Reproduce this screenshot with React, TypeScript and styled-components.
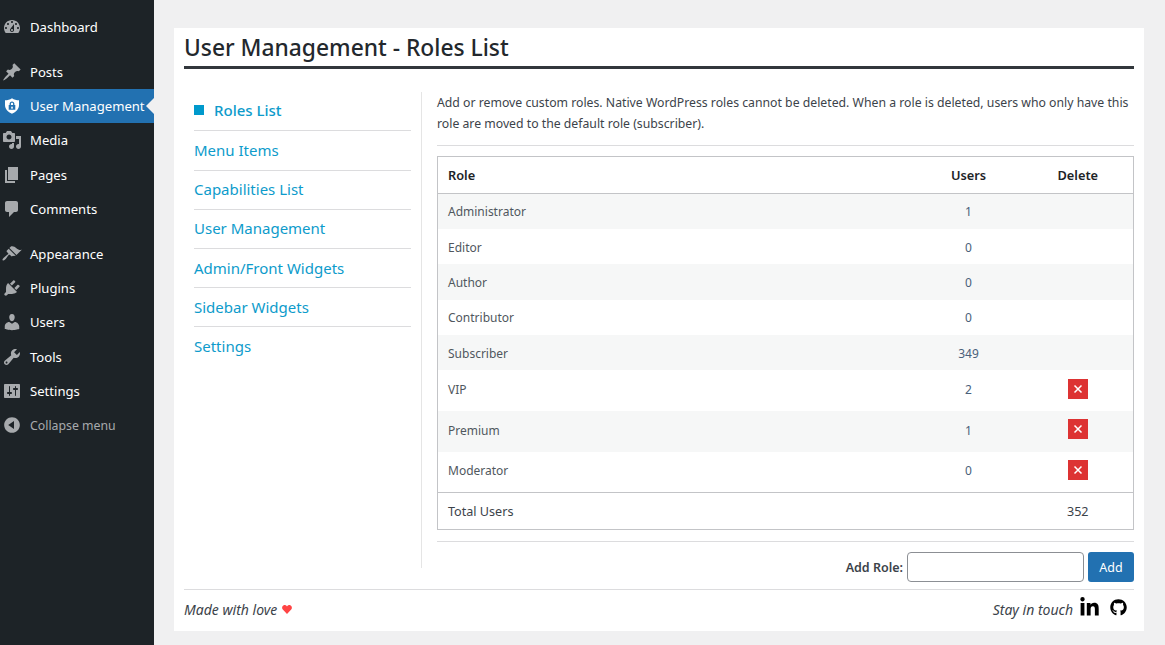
import { createGlobalStyle } from "styled-components";
import styled from "styled-components";
import { FaGithub, FaLinkedinIn } from "react-icons/fa";

const GlobalStyle = createGlobalStyle`
  html, body {
    margin: 0;
    padding: 0;
    background: #f0f0f1;
    font-family: "Noto Sans", "Open Sans", sans-serif;
    font-size: 13px;
    color: #3c434a;
  }
  * { box-sizing: border-box; }
`;

const icons = {
  dashboard:
    "M3.76 16h12.48c1.1-1.37 1.76-3.11 1.76-5 0-4.42-3.58-8-8-8s-8 3.58-8 8c0 1.89.66 3.63 1.76 5zM10 4c.55 0 1 .45 1 1s-.45 1-1 1-1-.45-1-1 .45-1 1-1zM6 6c.55 0 1 .45 1 1s-.45 1-1 1-1-.45-1-1 .45-1 1-1zm8 0c.55 0 1 .45 1 1s-.45 1-1 1-1-.45-1-1 .45-1 1-1zm-5.37 5.55L12 7v6c0 1.1-.9 2-2 2s-2-.9-2-2c0-.57.24-1.08.63-1.45zM4 10c.55 0 1 .45 1 1s-.45 1-1 1-1-.45-1-1 .45-1 1-1zm12 0c.55 0 1 .45 1 1s-.45 1-1 1-1-.45-1-1 .45-1 1-1zm-5 3c0-.55-.45-1-1-1s-1 .45-1 1 .45 1 1 1 1-.45 1-1z",
  posts:
    "M10.44 3.02l1.82-1.82 6.36 6.35-1.83 1.82c-1.05-.68-2.48-.57-3.41.36l-.75.75c-.92.93-1.04 2.35-.35 3.41l-1.83 1.82-2.41-2.41-2.8 2.79c-.42.42-3.38 2.71-3.8 2.29s1.86-3.39 2.28-3.81l2.79-2.79L4.1 9.36l1.83-1.82c1.05.69 2.48.57 3.4-.36l.75-.75c.93-.92 1.05-2.35.36-3.41z",
  shield:
    "M10 2.2c2.1 1.4 4.4 2 7 2.1v4.6c0 3.9-2.9 6.9-7 8.8-4.1-1.9-7-4.9-7-8.8V4.3c2.6-.1 4.9-.7 7-2.1zM10 5.4c-1.4 0-2.4 1-2.4 2.4v1.1h-.9v4.8h6.6V8.9h-.9V7.8c0-1.4-1-2.4-2.4-2.4zm0 1.3c.7 0 1.1.4 1.1 1.1v1.1H8.9V7.8c0-.7.4-1.1 1.1-1.1zm0 3.7c.5 0 .9.4.9.9 0 .3-.2.6-.4.8v.9h-1v-.9c-.2-.2-.4-.5-.4-.8 0-.5.4-.9.9-.9z",
  media:
    "M13 11V4c0-.55-.45-1-1-1h-1.67L9 1H5L3.67 3H2c-.55 0-1 .45-1 1v7c0 .55.45 1 1 1h10c.55 0 1-.45 1-1zM7 4.5c1.38 0 2.5 1.12 2.5 2.5S8.38 9.5 7 9.5 4.5 8.38 4.5 7 5.62 4.5 7 4.5zM14 6h5v10.5c0 1.38-1.12 2.5-2.5 2.5S14 17.88 14 16.5s1.12-2.5 2.5-2.5c.17 0 .34.02.5.05V9h-3V6zm-4 8.05V13h2v3.5c0 1.38-1.12 2.5-2.5 2.5S7 17.88 7 16.5 8.12 14 9.5 14c.17 0 .34.02.5.05z",
  pages: "M6 15V2h10v13H6zm-1 1h8v2H3V5h2v11z",
  comments:
    "M5 2h9c1.1 0 2 .9 2 2v7c0 1.1-.9 2-2 2h-2l-5 5v-5H5c-1.1 0-2-.9-2-2V4c0-1.1.9-2 2-2z",
  appearance:
    "M14.48 11.06L7.41 3.99l1.5-1.5c.5-.56 2.3-.47 3.51.32 1.21.8 1.43 1.28 2.91 2.1 1.18.64 2.45 1.26 4.45.85zm-.71.71L6.7 4.7 4.93 6.47c-.39.39-.39 1.02 0 1.41l1.06 1.06c.39.39.39 1.03 0 1.42-.6.6-1.43 1.11-2.21 1.69-.78.58-1.58 1.15-2.27 1.84-.98.98-1.34 1.94-.83 2.45.51.51 1.47.15 2.45-.83.69-.69 1.26-1.49 1.84-2.27.58-.78 1.09-1.61 1.69-2.21.39-.39 1.02-.39 1.41 0l1.06 1.06c.39.39 1.02.39 1.41 0z",
  plugins:
    "M13.11 4.36L9.87 7.6 8 5.73l3.24-3.24c.35-.34 1.05-.2 1.56.32.52.51.66 1.21.31 1.55zm-8 1.77l.91-1.12 9.01 9.01-1.19.84c-.71.71-2.63 1.16-3.82 1.16H6.14L4.9 17.26c-.59.59-1.54.59-2.12 0-.59-.58-.59-1.53 0-2.12l1.24-1.24v-3.88c0-1.13.4-3.19 1.09-3.89zm7.26 3.97l3.24-3.24c.34-.35 1.04-.21 1.55.31.52.51.66 1.21.31 1.55l-3.24 3.25z",
  users:
    "M10 9.25c-2.27 0-2.73-3.44-2.73-3.44C7 4.02 7.82 2 9.97 2c2.16 0 2.98 2.02 2.71 3.81 0 0-.41 3.44-2.68 3.44zm0 2.57L12.72 10c2.39 0 4.52 2.33 4.52 4.53v2.49s-3.65 1.13-7.24 1.13c-3.65 0-7.24-1.13-7.24-1.13v-2.49c0-2.25 1.94-4.48 4.47-4.48z",
  tools:
    "M16.68 9.77c-1.34 1.34-3.3 1.67-4.95.99l-5.41 6.52c-.99.99-2.59.99-3.58 0s-.99-2.59 0-3.57l6.52-5.42c-.68-1.65-.35-3.61.99-4.95 1.28-1.28 3.12-1.62 4.72-1.06l-2.89 2.89 2.82 2.82 2.86-2.87c.53 1.58.18 3.39-1.08 4.65zM3.81 16.21c.4.39 1.04.39 1.43 0 .4-.4.4-1.04 0-1.43-.39-.4-1.03-.4-1.43 0-.39.39-.39 1.03 0 1.43z",
  settings:
    "M18 16V4c0-.55-.45-1-1-1H3c-.55 0-1 .45-1 1v12c0 .55.45 1 1 1h14c.55 0 1-.45 1-1zM8 11h1c.55 0 1 .45 1 1s-.45 1-1 1H8v1.5c0 .28-.22.5-.5.5s-.5-.22-.5-.5V13H6c-.55 0-1-.45-1-1s.45-1 1-1h1V5.5c0-.28.22-.5.5-.5s.5.22.5.5V11zm5-2h-1c-.55 0-1-.45-1-1s.45-1 1-1h1V5.5c0-.28.22-.5.5-.5s.5.22.5.5V7h1c.55 0 1 .45 1 1s-.45 1-1 1h-1v5.5c0 .28-.22.5-.5.5s-.5-.22-.5-.5V9z",
  collapse:
    "M10 2.16c4.33 0 7.84 3.51 7.84 7.84s-3.51 7.84-7.84 7.84S2.16 14.33 2.16 10 5.71 2.16 10 2.16zm2 11.72V6.12L6.18 9.97z",
};

type IconName = keyof typeof icons;

const menuGroups: { icon: IconName; label: string; current?: boolean }[][] = [
  [{ icon: "dashboard", label: "Dashboard" }],
  [
    { icon: "posts", label: "Posts" },
    { icon: "shield", label: "User Management", current: true },
    { icon: "media", label: "Media" },
    { icon: "pages", label: "Pages" },
    { icon: "comments", label: "Comments" },
  ],
  [
    { icon: "appearance", label: "Appearance" },
    { icon: "plugins", label: "Plugins" },
    { icon: "users", label: "Users" },
    { icon: "tools", label: "Tools" },
    { icon: "settings", label: "Settings" },
  ],
];

const navItems = [
  "Roles List",
  "Menu Items",
  "Capabilities List",
  "User Management",
  "Admin/Front Widgets",
  "Sidebar Widgets",
  "Settings",
];

const roles = [
  { name: "Administrator", users: 1 },
  { name: "Editor", users: 0 },
  { name: "Author", users: 0 },
  { name: "Contributor", users: 0 },
  { name: "Subscriber", users: 349 },
  { name: "VIP", users: 2, removable: true },
  { name: "Premium", users: 1, removable: true },
  { name: "Moderator", users: 0, removable: true },
];

const App = () => {
  return (
    <Page>
      <GlobalStyle />
      <Sidebar>
        {menuGroups.map((group, i) => (
          <MenuGroup key={i}>
            {group.map((item) => (
              <MenuItem key={item.label} $current={item.current}>
                <MenuIcon viewBox="0 0 20 20" $current={item.current}>
                  <path d={icons[item.icon]} />
                </MenuIcon>
                {item.label}
                {item.current && <CurrentArrow />}
              </MenuItem>
            ))}
          </MenuGroup>
        ))}
        <CollapseRow>
          <MenuIcon viewBox="0 0 20 20">
            <path d={icons.collapse} />
          </MenuIcon>
          Collapse menu
        </CollapseRow>
      </Sidebar>
      <Main>
        <Card>
          <Title>User Management - Roles List</Title>
          <Columns>
            <SideNav>
              {navItems.map((label, i) => (
                <NavItem key={label} $active={i === 0}>
                  {label}
                </NavItem>
              ))}
            </SideNav>
            <Content>
              <Intro>
                Add or remove custom roles. Native WordPress roles cannot be deleted. When a role is
                deleted, users who only have this role are moved to the default role (subscriber).
              </Intro>
              <RolesTable>
                <thead>
                  <tr>
                    <HeadCell>Role</HeadCell>
                    <HeadCell $center>Users</HeadCell>
                    <HeadCell $center>Delete</HeadCell>
                  </tr>
                </thead>
                <tbody>
                  {roles.map((role) => (
                    <RoleRow key={role.name}>
                      <Cell>{role.name}</Cell>
                      <Cell $center>{role.users}</Cell>
                      <Cell $center>
                        {role.removable && (
                          <DeleteButton aria-label={`Delete ${role.name}`}>
                            <svg width="10" height="10" viewBox="0 0 10 10">
                              <path d="M1.5 1.5l7 7M8.5 1.5l-7 7" stroke="#fff" strokeWidth="1.5" />
                            </svg>
                          </DeleteButton>
                        )}
                      </Cell>
                    </RoleRow>
                  ))}
                </tbody>
                <tfoot>
                  <tr>
                    <TotalCell>Total Users</TotalCell>
                    <TotalCell />
                    <TotalCell $center>352</TotalCell>
                  </tr>
                </tfoot>
              </RolesTable>
              <AddRow>
                <AddLabel>Add Role:</AddLabel>
                <AddInput />
                <AddButton>Add</AddButton>
              </AddRow>
            </Content>
          </Columns>
          <Footer>
            <FooterText>
              Made with love
              <Heart viewBox="0 0 10 9">
                <path d="M5 9L.8 4.6C-.4 3.2 0 .9 1.7.3 3 -.2 4.3.4 5 1.5 5.7.4 7-.2 8.3.3 10 .9 10.4 3.2 9.2 4.6z" />
              </Heart>
            </FooterText>
            <FooterRight>
              <FooterText>Stay in touch</FooterText>
              <SocialIcons>
                <FaLinkedinIn size={21} color="#000" />
                <FaGithub size={17} color="#000" />
              </SocialIcons>
            </FooterRight>
          </Footer>
        </Card>
      </Main>
    </Page>
  );
};

export default App;

const Page = styled.div`
  display: flex;
  height: 645px;
  overflow: hidden;
`;

const Sidebar = styled.nav`
  width: 154px;
  flex-shrink: 0;
  background: #1d2327;
  padding-top: 10px;
`;

const MenuGroup = styled.div`
  margin-bottom: 10px;

  &:nth-of-type(3) {
    margin-bottom: 0;
  }
`;

const MenuItem = styled.div<{ $current?: boolean }>`
  position: relative;
  display: flex;
  align-items: center;
  gap: 8px;
  height: 34.4px;
  padding-left: 2px;
  font-size: 13.1px;
  white-space: nowrap;
  color: #fff;
  background: ${(p) => (p.$current ? "#2271b1" : "transparent")};
`;

const MenuIcon = styled.svg<{ $current?: boolean }>`
  width: 20px;
  height: 20px;
  flex-shrink: 0;
  fill-rule: evenodd;
  fill: ${(p) => (p.$current ? "#fff" : "#a7aaad")};
`;

const CurrentArrow = styled.span`
  position: absolute;
  right: 0;
  top: 50%;
  margin-top: -8px;
  border: 8px solid transparent;
  border-right-color: #f0f0f1;
`;

const CollapseRow = styled(MenuItem)`
  color: #a7aaad;
  font-size: 12.3px;
`;

const Main = styled.main`
  flex: 1;
  padding: 28px 21px 14px 20px;
`;

const Card = styled.section`
  background: #fff;
  height: 603px;
  padding: 0 10px;
`;

const Title = styled.h1`
  margin: 0;
  height: 41px;
  border-bottom: 3px solid #32373c;
  font-size: 22.8px;
  font-weight: 500;
  line-height: 40px;
  color: #23282d;
`;

const Columns = styled.div`
  display: flex;
  padding: 23px 0 0 10px;
  height: 520px;
`;

const SideNav = styled.ul`
  width: 217px;
  flex-shrink: 0;
  margin: 0;
  padding: 0;
  list-style: none;
`;

const NavItem = styled.li<{ $active?: boolean }>`
  display: flex;
  align-items: center;
  height: 39.2px;
  padding-bottom: 1px;
  border-bottom: 1px solid #dcdcde;
  font-size: 15px;
  font-weight: ${(p) => (p.$active ? 500 : 400)};
  color: #0d9bcb;

  ${(p) =>
    p.$active &&
    `
    &::before {
      content: "";
      width: 10px;
      height: 10px;
      margin-right: 10px;
      background: #0099cc;
    }
  `}

  &:first-child {
    height: 39.4px;
    padding-bottom: 2px;
  }

  &:last-child {
    padding-bottom: 2px;
    border-bottom: none;
  }
`;

const Content = styled.div`
  flex: 1;
  margin-left: 10px;
  padding-left: 15px;
  height: 476px;
  border-left: 1px solid #e5e5e5;
`;

const Intro = styled.p`
  margin: 0 0 10px;
  padding-bottom: 11px;
  border-bottom: 1px solid #dcdcde;
  font-size: 12.25px;
  line-height: 21px;
  color: #3c434a;
`;

const RolesTable = styled.table`
  width: 100%;
  border-collapse: collapse;
  border: 1px solid #c3c4c7;
  table-layout: fixed;
  font-size: 12px;

  th:nth-child(1),
  td:nth-child(1) {
    width: 471px;
  }

  th:nth-child(2),
  td:nth-child(2) {
    width: 120px;
  }

  th:nth-child(3),
  td:nth-child(3) {
    padding-right: 16px;
  }
`;

const HeadCell = styled.th<{ $center?: boolean }>`
  height: 37px;
  padding: 0 10px;
  border-bottom: 1px solid #c3c4c7;
  font-size: 12.8px;
  font-weight: 600;
  color: #1d2327;
  text-align: ${(p) => (p.$center ? "center" : "left")};
`;

const RoleRow = styled.tr`
  height: 35.4px;

  &:nth-child(odd) {
    background: #f6f7f7;
  }

  &:nth-child(n + 6) {
    height: 40.7px;
  }

  td {
    padding-top: 1px;
  }

  &:nth-child(n + 6) td {
    padding-top: 0;
    padding-bottom: 2px;
  }
`;

const Cell = styled.td<{ $center?: boolean }>`
  padding: 0 10px;
  color: #50575e;
  text-align: ${(p) => (p.$center ? "center" : "left")};

  &:nth-child(2) {
    color: #4a5f7a;
  }
`;

const DeleteButton = styled.button`
  display: inline-flex;
  align-items: center;
  justify-content: center;
  width: 20px;
  height: 20px;
  margin-bottom: 2px;
  padding: 0;
  border: none;
  vertical-align: middle;
  background: #dd3333;
`;

const TotalCell = styled.td<{ $center?: boolean }>`
  height: 37px;
  padding: 1px 10px 0;
  border-top: 1px solid #c3c4c7;
  font-size: 12.6px;
  color: #3c434a;
  text-align: ${(p) => (p.$center ? "center" : "left")};
`;

const AddRow = styled.div`
  display: flex;
  align-items: center;
  justify-content: flex-end;
  gap: 4px;
  height: 41px;
  margin-top: 11px;
  padding-top: 10px;
  border-top: 1px solid #dcdcde;
`;

const AddLabel = styled.label`
  font-size: 12.5px;
  font-weight: 600;
  color: #3c434a;
`;

const AddInput = styled.input`
  width: 177px;
  height: 30px;
  border: 1px solid #8c8f94;
  border-radius: 4px;
  background: #fff;
`;

const AddButton = styled.button`
  width: 46px;
  height: 30px;
  padding: 0;
  border: none;
  border-radius: 3px;
  font: inherit;
  font-size: 12.5px;
  color: #fff;
  background: #2271b1;
`;

const Footer = styled.footer`
  display: flex;
  align-items: center;
  justify-content: space-between;
  height: 42px;
  padding: 0 7px 2px 0;
  border-top: 1px solid #dcdcde;
`;

const FooterText = styled.span`
  display: inline-flex;
  align-items: center;
  font-size: 14px;
  font-style: italic;
  color: #3c434a;
`;

const Heart = styled.svg`
  width: 10px;
  height: 9px;
  margin-left: 5px;
  fill: #f44;
`;

const FooterRight = styled.div`
  display: flex;
  align-items: center;
  gap: 6px;
`;

const SocialIcons = styled.div`
  display: flex;
  align-items: center;
  gap: 10px;
  margin-bottom: 4px;
`;
